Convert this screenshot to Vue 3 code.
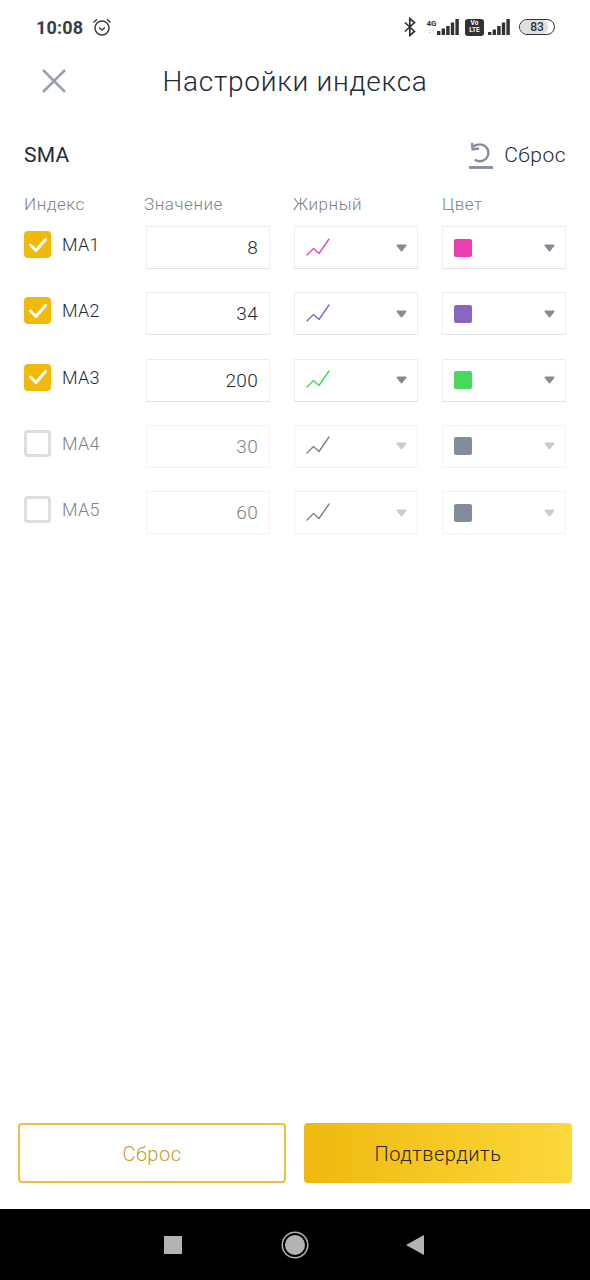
<script setup>
const rows = [
  { name: 'MA1', value: '8', color: '#e84aa9', swatch: '#ea3fb0', on: true },
  { name: 'MA2', value: '34', color: '#8a66b4', swatch: '#8a66c4', on: true },
  { name: 'MA3', value: '200', color: '#45da5c', swatch: '#45da5c', on: true },
  { name: 'MA4', value: '30', color: '#7d828c', swatch: '#848b99', on: false },
  { name: 'MA5', value: '60', color: '#7d828c', swatch: '#848b99', on: false },
]
</script>

<template>
  <div class="page">
    <div class="status">
      <div class="status-left">
        <span class="time">10:08</span>
        <svg width="20" height="20" viewBox="0 0 20 20" fill="none" stroke="#3a3d42" stroke-width="1.5">
          <circle cx="10" cy="11" r="7" />
          <path d="M7 10.5l3 2.6 3-2.6" stroke-width="1.3" />
          <path d="M1.5 5.5L5 2.3M18.5 5.5L15 2.3" />
        </svg>
      </div>
      <div class="status-right">
        <svg class="bt" width="14" height="20" viewBox="0 0 14 20" fill="none" stroke="#2f3237" stroke-width="1.7">
          <path d="M2 5.5l9.5 9L6.8 18.5V1.5l4.7 4-9.5 9" />
        </svg>
        <div class="net">
          <span class="g4">4G</span>
          <span class="arrows">↓↑</span>
        </div>
        <svg class="sig" width="22" height="16" viewBox="0 0 22 16" fill="#2f3237">
          <rect x="0" y="12" width="3.4" height="4" /><rect x="4.6" y="9.5" width="3.4" height="6.5" /><rect x="9.2" y="7" width="3.4" height="9" /><rect x="13.8" y="3.5" width="3.4" height="12.5" /><rect x="18.4" y="0" width="3.4" height="16" />
        </svg>
        <div class="volte"><span>Vo</span><span>LTE</span></div>
        <svg class="sig" width="22" height="16" viewBox="0 0 22 16" fill="#2f3237">
          <rect x="0" y="13" width="3.4" height="3" /><rect x="4.6" y="10.5" width="3.4" height="5.5" /><rect x="9.2" y="7" width="3.4" height="9" /><rect x="13.8" y="3.5" width="3.4" height="12.5" /><rect x="18.4" y="0" width="3.4" height="16" />
        </svg>
        <div class="battery"><span class="battery-fill"></span><span class="battery-num">83</span></div>
      </div>
    </div>

    <header class="head">
      <svg class="close" width="26" height="26" viewBox="0 0 26 26" fill="none" stroke="#99a0b4" stroke-width="2.6">
        <path d="M2 2l22 22M24 2L2 24" />
      </svg>
      <h1 class="title">Настройки индекса</h1>
    </header>

    <div class="section">
      <span class="sma">SMA</span>
      <div class="reset">
        <svg width="26" height="28" viewBox="0 0 26 28" fill="none" stroke="#848b99" stroke-width="2.4">
          <path d="M5.5 4.5C7 3.2 9.4 2.4 12 2.4a8.4 8.4 0 0 1 0 16.8c-2 0-3.6-.5-5-1.5" />
          <path d="M4 0.8l.6 6.6 6.4-.9" stroke-linejoin="round" />
          <path d="M1 25.5h24" stroke-width="2.8" />
        </svg>
        <span>Сброс</span>
      </div>
    </div>

    <div class="grid labels">
      <span>Индекс</span>
      <span class="shift">Значение</span>
      <span class="shift-s">Жирный</span>
      <span>Цвет</span>
    </div>

    <div class="rows">
      <div v-for="r in rows" :key="r.name" class="grid row" :class="{ off: !r.on }">
        <div class="check-cell">
          <span class="box" :class="{ checked: r.on }">
            <svg v-if="r.on" width="20" height="16" viewBox="0 0 20 16" fill="none" stroke="#fff" stroke-width="3" stroke-linecap="round" stroke-linejoin="round">
              <path d="M2.5 8l5.5 5.5L17.5 2.5" />
            </svg>
          </span>
          <span class="ma">{{ r.name }}</span>
        </div>
        <div class="field value">{{ r.value }}</div>
        <div class="field select">
          <svg width="24" height="20" viewBox="0 0 24 20" fill="none" :stroke="r.color" stroke-width="1.4" stroke-linecap="round" stroke-linejoin="round">
            <path d="M1 17l6.5-6.5L13 15.5 23 1" />
          </svg>
          <svg class="caret" width="11" height="8" viewBox="0 0 11 8"><path d="M1.5 1.5h8L5.5 6.5z" stroke-width="2" stroke-linejoin="round" /></svg>
        </div>
        <div class="field select">
          <span class="swatch" :style="{ background: r.swatch }"></span>
          <svg class="caret" width="11" height="8" viewBox="0 0 11 8"><path d="M1.5 1.5h8L5.5 6.5z" stroke-width="2" stroke-linejoin="round" /></svg>
        </div>
      </div>
    </div>

    <div class="spacer"></div>

    <div class="actions">
      <button class="btn ghost">Сброс</button>
      <button class="btn primary">Подтвердить</button>
    </div>

    <nav class="nav">
      <span class="nav-square"></span>
      <span class="nav-circle"></span>
      <svg class="nav-back" width="18" height="20" viewBox="0 0 18 20" fill="#b3b3b3"><path d="M0 10L18 0v20z" /></svg>
    </nav>
  </div>
</template>

<style>
html, body { margin: 0; background: #fff; }
</style>

<style scoped>
.page {
  width: 590px;
  height: 1280px;
  display: flex;
  flex-direction: column;
  background: #fff;
  font-family: Roboto, "Noto Sans", sans-serif;
  color: #202b38;
  overflow: hidden;
}
.status {
  height: 54px;
  box-sizing: border-box;
  padding: 0 35px 0 36px;
  display: flex;
  justify-content: space-between;
  align-items: center;
}
.status-left { display: flex; align-items: center; gap: 9px; }
.time { font-size: 18px; font-weight: 700; color: #3a3d42; letter-spacing: 0.2px; }
.status-right { display: flex; align-items: center; }
.bt { margin-right: 9px; }
.net { width: 11px; display: flex; flex-direction: column; align-items: center; line-height: 1; }
.g4 { font-size: 8px; font-weight: 700; color: #2f3237; }
.arrows { font-size: 7px; color: #9a9da3; }
.sig { margin-right: 6px; }
.volte {
  width: 19px; height: 17px; border-radius: 3px; background: #2f3237; color: #fff;
  display: flex; flex-direction: column; align-items: center; justify-content: center;
  font-size: 6.5px; font-weight: 700; line-height: 7px; margin-right: 4px;
}
.battery {
  position: relative; width: 34px; height: 14px; box-sizing: content-box; border: 1.5px solid #2f3237; border-radius: 8px;
  display: flex; align-items: center; justify-content: center; margin-left: 3px; overflow: hidden;
}
.battery-fill { position: absolute; left: 0; top: 0; bottom: 0; width: 83%; background: #dedfe1; border-radius: 6px; }
.battery-num { position: relative; font-size: 12px; font-weight: 500; color: #2f3237; }
.head {
  height: 54px;
  position: relative;
  display: flex;
  align-items: center;
  justify-content: center;
}
.close { position: absolute; left: 41px; top: 14px; }
.title {
  margin: 0;
  font-size: 28px;
  font-weight: 300;
  letter-spacing: 0.75px;
  color: #202b38;
}
.section {
  margin-top: 22px;
  height: 50px;
  padding: 0 24px;
  display: flex;
  justify-content: space-between;
  align-items: center;
}
.sma { font-size: 21px; font-weight: 400; color: #202b38; letter-spacing: 0.3px; }
.reset { display: flex; align-items: center; gap: 10px; font-size: 21px; font-weight: 300; letter-spacing: 0.5px; color: #202b38; }
.reset svg { margin-top: 2px; }
.grid {
  display: grid;
  grid-template-columns: 98px 124px 124px 124px;
  column-gap: 24px;
  padding: 0 24px;
}
.labels {
  margin-top: 12px;
  height: 24px;
  align-items: center;
  font-size: 17px;
  font-weight: 300;
  letter-spacing: 0.55px;
  color: #7d828c;
}
.shift { margin-left: -2px; }
.shift-s { margin-left: -1px; }
.rows {
  margin-top: 10px;
  display: flex;
  flex-direction: column;
  gap: 23.25px;
}
.row { height: 43px; }
.check-cell { display: flex; align-items: flex-start; gap: 11px; padding-top: 5px; }
.box {
  width: 27px; height: 27px; box-sizing: border-box; border-radius: 4px;
  border: 3px solid #dcdde0; display: flex; align-items: center; justify-content: center; background: #fff;
}
.box.checked { background: #f0b90b; border-color: #f0b90b; }
.ma { font-size: 18px; font-weight: 300; letter-spacing: 0.2px; line-height: 28px; color: #202b38; }
.field {
  box-sizing: border-box;
  height: 43px;
  border: 1px solid #eceded;
  border-bottom-color: #e2e3e5;
  background: #fff;
  display: flex;
  align-items: center;
}
.value {
  justify-content: flex-end;
  padding: 0 11px 0 0;
  font-size: 19px;
  font-weight: 300;
  letter-spacing: 0.3px;
  color: #202b38;
}
.select { justify-content: space-between; padding: 0 10px 0 11px; }
.caret { fill: #848b99; stroke: #848b99; }
.swatch { width: 18px; height: 18px; border-radius: 2px; }
.off .field { border-color: #f3f4f4; }
.off .ma, .off .value { color: #7d828c; }
.off .caret { fill: #c9cbcf; stroke: #c9cbcf; }
.spacer { flex: 1; }
.actions {
  display: flex;
  gap: 18px;
  padding: 0 18px;
  margin-bottom: 26px;
}
.btn {
  width: 268px;
  height: 60px;
  box-sizing: border-box;
  padding: 2px 0 0;
  border-radius: 4px;
  font-family: inherit;
  font-size: 20px;
  font-weight: 300;
  letter-spacing: 0.5px;
}
.ghost { background: #fff; border: 2px solid #ecbe45; color: #c99b24; }
.primary { border: 0; background: linear-gradient(90deg, #efb90d, #fcd83c); color: #2c2410; letter-spacing: 0.55px; }
.nav {
  height: 71px;
  flex: none;
  box-sizing: border-box;
  padding-right: 3px;
  background: #000;
  display: flex;
  align-items: center;
  justify-content: center;
  gap: 100px;
}
.nav-square { width: 18px; height: 18px; background: #b3b3b3; }
.nav-circle {
  width: 24px; height: 24px; box-sizing: border-box; border-radius: 50%;
  background: #b3b3b3; border: 2px solid #000; box-shadow: 0 0 0 1.5px #b3b3b3;
  margin: 0 1px;
}
.nav-back { margin-left: -2px; }
</style>
